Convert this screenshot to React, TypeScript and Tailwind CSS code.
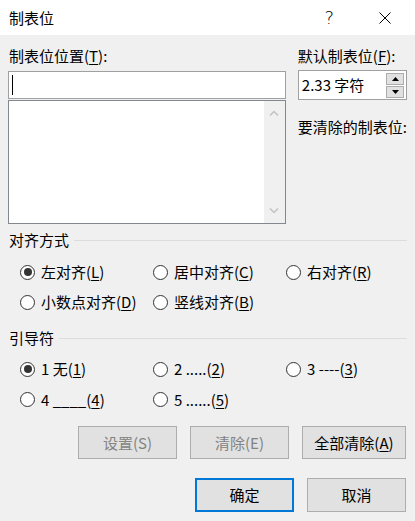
import React from "react";

const U = ({ c }: { c: string }) => <span className="underline underline-offset-2">{c}</span>;

function Radio({ checked, children }: { checked?: boolean; children: React.ReactNode }) {
  return (
    <div className="flex items-center h-full">
      <div className="w-[15px] h-[15px] rounded-full border border-[#333333] bg-white flex items-center justify-center shrink-0">
        {checked && <div className="w-[8px] h-[8px] rounded-full bg-[#333333]" />}
      </div>
      <div className="ml-[6px] text-[15px] leading-[20px] whitespace-pre">{children}</div>
    </div>
  );
}

function Header({ title }: { title: string }) {
  return (
    <div className="flex items-center h-[20px]">
      <span className="text-[15px] leading-[20px] pl-[1px]">{title}</span>
      <div className="flex-1 h-px bg-[#dcdcdc] ml-[5px]" />
    </div>
  );
}

function Btn({ children, disabled, primary, w }: { children: React.ReactNode; disabled?: boolean; primary?: boolean; w: string }) {
  return (
    <div
      className={
        "flex items-center justify-center bg-[#e1e1e1] text-[15px] leading-[20px] " +
        w +
        (primary ? " border-2 border-[#0078d7]" : " border border-[#adadad]") +
        (disabled ? " text-[#838383]" : " text-black")
      }
    >
      {children}
    </div>
  );
}

export default function App() {
  return (
    <div
      className="w-[415px] h-[521px] bg-[#f0f0f0] text-black overflow-hidden"
      style={{ fontFamily: '"Noto Sans CJK SC", "Noto Sans", sans-serif' }}
    >
      {/* Title bar */}
      <div className="h-[35px] bg-white flex items-center relative">
        <span className="ml-[9px] text-[15px] leading-[20px]">制表位</span>
        <div className="flex-1" />
        <span className="text-[18px] leading-[20px] font-normal mr-[45px]" style={{ fontFamily: '"DejaVu Sans", sans-serif', fontWeight: 300 }}>?</span>
        <svg width="12" height="12" viewBox="0 0 12 12" className="mr-[24px]">
          <path d="M0.5 0.5 L11.5 11.5 M11.5 0.5 L0.5 11.5" stroke="#000" strokeWidth="1" />
        </svg>
      </div>

      <div className="px-[8px]">
        {/* Top section */}
        <div className="flex">
          <div className="w-[278px] flex flex-col">
            <div className="mt-[11px] text-[15px] leading-[20px] pl-[1px]">
              制表位位置(<U c="T" />):
            </div>
            <div className="mt-[5px] h-[28px] bg-white border border-[#a0a0a0] flex items-center">
              <div className="ml-[3px] w-px h-[20px] bg-black" />
            </div>
            <div className="mt-[1px] h-[124px] bg-white border border-[#828790] flex">
              <div className="flex-1" />
              <div className="w-[21px] bg-[#f0f0f0] flex flex-col items-center justify-between py-[9px]">
                <svg width="10" height="6" viewBox="0 0 10 6">
                  <path d="M1 5.5 L5 1.5 L9 5.5" stroke="#c2c2c2" strokeWidth="1.5" fill="none" />
                </svg>
                <svg width="10" height="6" viewBox="0 0 10 6">
                  <path d="M1 0.5 L5 4.5 L9 0.5" stroke="#c2c2c2" strokeWidth="1.5" fill="none" />
                </svg>
              </div>
            </div>
          </div>
          <div className="ml-[12px] flex-1 flex flex-col">
            <div className="mt-[11px] text-[15px] leading-[20px] whitespace-nowrap">
              默认制表位(<U c="F" />):
            </div>
            <div className="mt-[4px] h-[30px] bg-white border border-[#a0a0a0] flex items-center">
              <span className="ml-[3px] text-[15px] leading-[20px]">2.33 字符</span>
              <div className="flex-1" />
              <div className="flex flex-col mr-[2px] gap-px">
                <div className="w-[18px] h-[12px] bg-[#e1e1e1] border border-[#adadad] flex items-center justify-center">
                  <svg width="7" height="4" viewBox="0 0 7 4">
                    <path d="M0 4 L3.5 0 L7 4 Z" fill="#000" />
                  </svg>
                </div>
                <div className="w-[18px] h-[12px] bg-[#e1e1e1] border border-[#adadad] flex items-center justify-center">
                  <svg width="7" height="4" viewBox="0 0 7 4">
                    <path d="M0 0 L3.5 4 L7 0 Z" fill="#000" />
                  </svg>
                </div>
              </div>
            </div>
            <div className="mt-[17px] text-[15px] leading-[20px] whitespace-nowrap">要清除的制表位:</div>
          </div>
        </div>

        {/* Alignment */}
        <div className="mt-[6px]">
          <Header title="对齐方式" />
        </div>
        <div className="mt-[7px] pl-[12px] grid grid-cols-[133px_133px_1fr] grid-rows-[30px_30px]">
          <Radio checked>
            左对齐(<U c="L" />)
          </Radio>
          <Radio>
            居中对齐(<U c="C" />)
          </Radio>
          <Radio>
            右对齐(<U c="R" />)
          </Radio>
          <Radio>
            小数点对齐(<U c="D" />)
          </Radio>
          <Radio>
            竖线对齐(<U c="B" />)
          </Radio>
        </div>

        {/* Leader */}
        <div className="mt-[11px]">
          <Header title="引导符" />
        </div>
        <div className="mt-[6px] pl-[12px] grid grid-cols-[133px_133px_1fr] grid-rows-[30px_31px]">
          <Radio checked>
            1 无(<U c="1" />)
          </Radio>
          <Radio>
            2 .....(<U c="2" />)
          </Radio>
          <Radio>
            3 ----(<U c="3" />)
          </Radio>
          <Radio>
            4 ____(<U c="4" />)
          </Radio>
          <Radio>
            5 ......(<U c="5" />)
          </Radio>
        </div>

        {/* Buttons */}
        <div className="mt-[11px] flex justify-end gap-[13px] pr-[1px]">
          <Btn disabled w="w-[99px] h-[33px]">设置(S)</Btn>
          <Btn disabled w="w-[99px] h-[33px]">清除(E)</Btn>
          <Btn w="w-[104px] h-[33px]">
            全部清除(<U c="A" />)
          </Btn>
        </div>
        <div className="mt-[19px] flex justify-end gap-[13px] pr-[1px]">
          <Btn primary w="w-[99px] h-[34px]">确定</Btn>
          <Btn w="w-[99px] h-[34px]">取消</Btn>
        </div>
      </div>
    </div>
  );
}
